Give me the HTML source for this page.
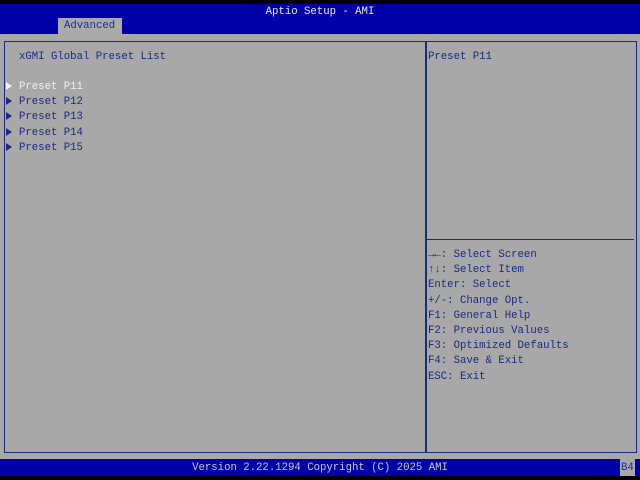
<html><head><style>
body{margin:0;width:640px;height:480px;background:#000;position:relative;overflow:hidden;font-family:"Liberation Mono","DejaVu Sans Mono",monospace;font-size:10.67px}
div{position:absolute}
.t{white-space:pre;line-height:15px;color:#1c2a80}
.a{display:inline-block;width:0;height:0;border-left:6px solid currentColor;border-top:4px solid transparent;border-bottom:4px solid transparent;margin-right:7px;vertical-align:-1px}
</style></head><body>
<div style="left:0;top:4px;width:640px;height:30px;background:#0000a8"></div>
<div class="t" style="left:0;top:5px;width:640px;text-align:center;color:#e8e8e8">Aptio Setup - AMI</div>
<div style="left:58px;top:18px;width:64px;height:16px;background:#aaaaaa"></div>
<div class="t" style="left:64px;top:19px;color:#1c2a9a">Advanced</div>
<div style="left:0;top:34px;width:640px;height:425px;background:#a8a8a8"></div>
<div style="left:4px;top:41px;width:633px;height:412px;border:1px solid #1c2a7a;box-sizing:border-box"></div>
<div style="left:425px;top:41px;width:2px;height:411px;background:#1c2a7a"></div>
<div style="left:427px;top:239px;width:207px;height:1px;background:#1c2a7a"></div>
<div class="t" style="left:19px;top:50px">xGMI Global Preset List</div>
<div class="t" style="left:6px;top:80px;color:#f0f0f0"><span class="a"></span>Preset P11</div>
<div class="t" style="left:6px;top:95px;line-height:15.3px"><span class="a"></span>Preset P12
<span class="a"></span>Preset P13
<span class="a"></span>Preset P14
<span class="a"></span>Preset P15</div>
<div class="t" style="left:428px;top:50px">Preset P11</div>
<div class="t" style="left:428px;top:248px;line-height:15.2px">→←: Select Screen
↑↓: Select Item
Enter: Select
+/-: Change Opt.
F1: General Help
F2: Previous Values
F3: Optimized Defaults
F4: Save &amp; Exit
ESC: Exit</div>
<div style="left:0;top:459px;width:640px;height:17px;background:#0000a8"></div>
<div class="t" style="left:0;top:461px;width:640px;text-align:center;color:#c8c8c8">Version 2.22.1294 Copyright (C) 2025 AMI</div>
<div style="left:620px;top:459px;width:15px;height:17px;background:#a8a8a8"></div>
<div class="t" style="left:621px;top:461px;color:#1c2a9a">B4</div>
</body></html>
